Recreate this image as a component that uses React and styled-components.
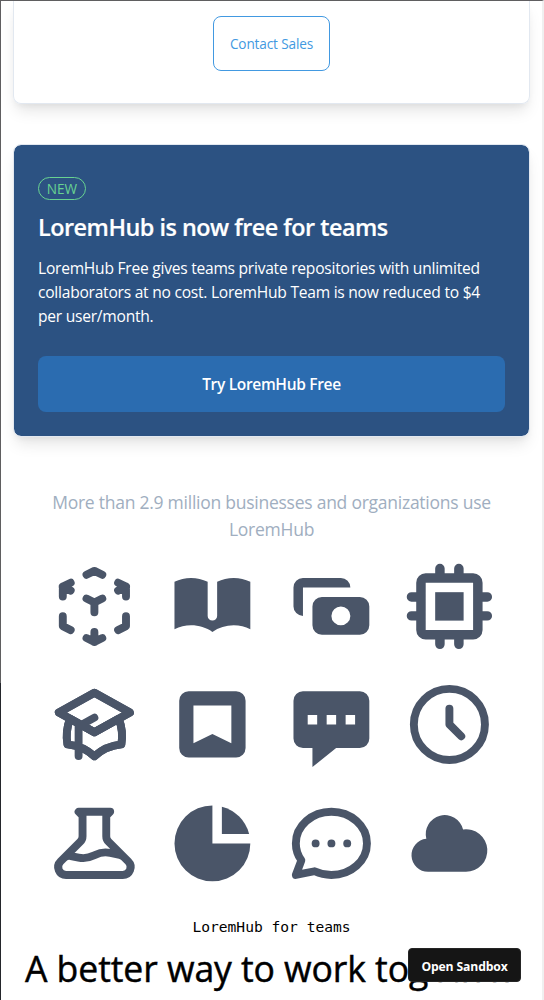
import React from "react";
import styled, { createGlobalStyle } from "styled-components";
import {
  HiOutlineCubeTransparent,
  HiBookOpen,
  HiCash,
  HiChip,
  HiOutlineAcademicCap,
  HiBookmarkAlt,
  HiOutlineClock,
  HiOutlineBeaker,
  HiChartPie,
  HiOutlineChat,
  HiCloud,
} from "react-icons/hi";

const GlobalStyle = createGlobalStyle`
  *, *::before, *::after { box-sizing: border-box; }
  html, body { margin: 0; padding: 0; background: #fff; overflow: hidden; }
  body { font-family: "Open Sans", "Noto Sans", sans-serif; color: #000; }
  h1, h2, p { margin: 0; font-weight: inherit; }
  button { font-family: inherit; cursor: pointer; }
`;

const Page = styled.main`
  width: 544px;
  height: 1000px;
  overflow: hidden;
  border-top: 1px solid #5f5e60;
  border-right: 2px solid #f0f0f0;
  background: linear-gradient(#5f5e60 682px, #24262b 682px) left top / 1px 100% no-repeat;
  padding: 0 12px 0 13px;
  display: flex;
  flex-direction: column;
`;

const Card = styled.section`
  flex: none;
  border: 1px solid #e2e8f0;
  border-radius: 8px;
  box-shadow: 0 10px 15px -3px rgba(0, 0, 0, 0.1), 0 4px 6px -2px rgba(0, 0, 0, 0.05);
`;

const SalesCard = styled(Card)`
  height: 103px;
  border-top: 0;
  border-radius: 0 0 8px 8px;
  padding-top: 15px;
  display: flex;
  justify-content: center;
  align-items: flex-start;
`;

const OutlineButton = styled.button`
  width: 117px;
  height: 55px;
  padding: 0;
  border: 1px solid #4299e1;
  border-radius: 8px;
  background: transparent;
  color: #4299e1;
  font-size: 13.6px;
  letter-spacing: -0.14px;
  white-space: nowrap;
`;

const PromoCard = styled(Card)`
  height: 293px;
  margin-top: 40px;
  padding: 32px 24px 24px;
  background: #2c5282;
  background-clip: padding-box;
  color: #fff;
  display: flex;
  flex-direction: column;
  align-items: flex-start;
`;

const Badge = styled.span`
  width: 48px;
  height: 23px;
  border: 1px solid #68d391;
  border-radius: 12px;
  color: #68d391;
  font-size: 13.6px;
  line-height: 22px;
  text-align: center;
`;

const PromoTitle = styled.h2`
  margin-top: 9px;
  font-size: 23.4px;
  letter-spacing: -0.5px;
  line-height: 36px;
  font-weight: 600;
  -webkit-text-stroke: 0.2px #fff;
  white-space: nowrap;
`;

const PromoText = styled.p`
  margin-top: 11px;
  font-size: 15.6px;
  letter-spacing: -0.25px;
  line-height: 24px;
  white-space: nowrap;
`;

const PromoButton = styled.button`
  width: 100%;
  height: 56px;
  margin-top: auto;
  border: 0;
  border-radius: 8px;
  background: #2b6cb0;
  color: #fff;
  font-size: 15.5px;
  letter-spacing: -0.32px;
  font-weight: 600;
`;

const Usage = styled.p`
  margin-top: 52px;
  font-size: 17.5px;
  letter-spacing: -0.25px;
  line-height: 27px;
  color: #a0aec0;
  text-align: center;
  white-space: nowrap;
`;

const IconGrid = styled.div`
  margin-top: 16px;
  padding-left: 0.4px;
  display: grid;
  grid-template-columns: repeat(4, 94.8px);
  justify-content: center;
  gap: 23.7px;
  color: #4a5568;

  svg {
    display: block;
    width: 94.8px;
    height: 94.8px;
    stroke-linecap: round;
    stroke-linejoin: round;
  }
`;

const Eyebrow = styled.p`
  margin-top: 24px;
  font-family: "DejaVu Sans Mono", monospace;
  font-size: 14.6px;
  line-height: 24px;
  text-align: center;
`;

const Headline = styled.h1`
  margin: 2px 0 0 12px;
  font-size: 35.6px;
  letter-spacing: -0.08px;
  line-height: 54px;
  -webkit-text-stroke: 0.45px #000;
  white-space: nowrap;
`;

const SandboxButton = styled.button`
  position: fixed;
  left: 408px;
  top: 948px;
  width: 113px;
  height: 34px;
  padding: 2px 0 0;
  border: 1px solid #252525;
  border-radius: 4px;
  background: #151515;
  color: #fff;
  font-size: 12.2px;
  letter-spacing: -0.15px;
  font-weight: 700;
  white-space: nowrap;
`;

function ChatIcon() {
  return (
    <svg viewBox="0 0 20 20" fill="currentColor">
      <path
        fillRule="evenodd"
        clipRule="evenodd"
        d="M18 5v8a2 2 0 01-2 2h-5l-5 4v-4H4a2 2 0 01-2-2V5a2 2 0 012-2h12a2 2 0 012 2zM7 8H5v2h2V8zm2 0h2v2H9V8zm6 0h-2v2h2V8z"
      />
    </svg>
  );
}

const icons = [
  HiOutlineCubeTransparent,
  HiBookOpen,
  HiCash,
  HiChip,
  HiOutlineAcademicCap,
  HiBookmarkAlt,
  ChatIcon,
  HiOutlineClock,
  HiOutlineBeaker,
  HiChartPie,
  HiOutlineChat,
  HiCloud,
];

export default function App() {
  return (
    <>
      <GlobalStyle />
      <Page>
        <SalesCard>
          <OutlineButton>Contact Sales</OutlineButton>
        </SalesCard>
        <PromoCard>
          <Badge>NEW</Badge>
          <PromoTitle>LoremHub is now free for teams</PromoTitle>
          <PromoText>
            LoremHub Free gives teams private repositories with unlimited
            <br />
            collaborators at no cost. LoremHub Team is now reduced to $4
            <br />
            per user/month.
          </PromoText>
          <PromoButton>Try LoremHub Free</PromoButton>
        </PromoCard>
        <Usage>
          More than 2.9 million businesses and organizations use
          <br />
          LoremHub
        </Usage>
        <IconGrid>
          {icons.map((Icon, i) => (
            <Icon key={i} />
          ))}
        </IconGrid>
        <Eyebrow>LoremHub for teams</Eyebrow>
        <Headline>A better way to work together</Headline>
      </Page>
      <SandboxButton>Open Sandbox</SandboxButton>
    </>
  );
}
